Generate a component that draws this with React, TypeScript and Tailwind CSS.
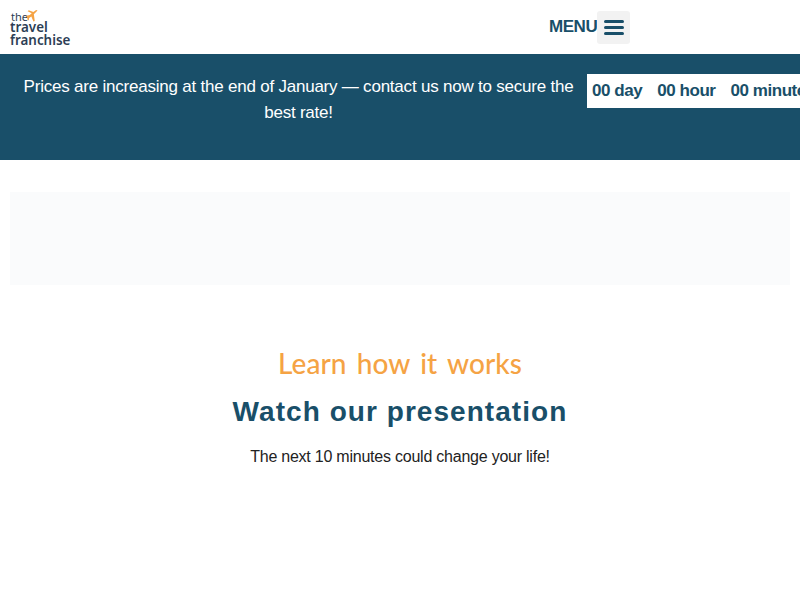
export default function App() {
  return (
    <div className="w-[800px] h-[600px] overflow-hidden bg-white" style={{ fontFamily: '"Liberation Sans", Arial, sans-serif' }}>
      {/* Header */}
      <header className="h-[54px] flex items-center pl-[10px]">
        <div className="relative w-[539px] h-[54px] font-['Noto_Sans',sans-serif] text-[#2d3e55] font-semibold">
          <span className="absolute left-[1px] top-[12px] text-[11px] leading-[10px] font-normal">the</span>
          <svg className="absolute left-[16px] top-[10px]" width="12" height="12" viewBox="0 0 13 13" fill="#f5a344">
            <path d="M12.5 .5 L8.5 4.5 L9.5 12 L8 12.5 L5.8 7 L3.4 8.6 L3 11 L1.8 11 L1.2 8 L0 6.2 L1.6 6 L4 5.4 L6.2 3.6 L1.8 1.4 L3 .4 L8 2.2 L11 0 Z" />
          </svg>
          <div className="absolute left-0 top-[21px] text-[13.4px] leading-[12.5px]">
            <div>travel</div>
            <div>franchise</div>
          </div>
        </div>
        <span className="w-[48px] text-[#194f69] font-bold text-[17px] tracking-[-0.45px] whitespace-nowrap">MENU</span>
        <button className="w-[33px] h-[33px] bg-[#f2f2f2] rounded-[3px] flex flex-col items-center justify-center gap-[3px] mb-[-1px]">
          <span className="block w-[20px] h-[3px] rounded-full bg-[#194f69]" />
          <span className="block w-[20px] h-[3px] rounded-full bg-[#194f69]" />
          <span className="block w-[20px] h-[3px] rounded-full bg-[#194f69]" />
        </button>
      </header>

      {/* Banner */}
      <section className="h-[106px] bg-[#194f69] flex items-start pt-[20px]">
        <p className="w-[587px] shrink-0 pl-[10px] text-center text-white text-[17px] tracking-[-0.22px] leading-[26px]">
          Prices are increasing at the end of January — contact us now to secure the best rate!
        </p>
        <div className="h-[34px] flex-1 bg-white flex items-center pl-[5px] gap-[15px] overflow-hidden whitespace-nowrap text-[#194f69] font-bold text-[17px] tracking-[-0.45px]">
          <span>00 day</span>
          <span>00 hour</span>
          <span>00 minute</span>
        </div>
      </section>

      {/* Video placeholder */}
      <div className="h-[93px] mx-[10px] mt-[32px] bg-[#fafbfc]" />

      {/* Presentation */}
      <section className="flex flex-col items-center mt-[58px]">
        <p className="h-[40px] text-[28px] leading-[40px] tracking-[0.1px] [word-spacing:3px] font-medium text-[#f5a344] font-['Lato',sans-serif]">Learn how it works</p>
        <h2 className="mt-[11px] text-[#194f69] font-bold text-[28px] leading-[36px] tracking-[1.05px]">Watch our presentation</h2>
        <p className="mt-[15px] text-[#222222] text-[16px] tracking-[-0.23px] leading-[24px]">The next 10 minutes could change your life!</p>
      </section>
    </div>
  );
}
